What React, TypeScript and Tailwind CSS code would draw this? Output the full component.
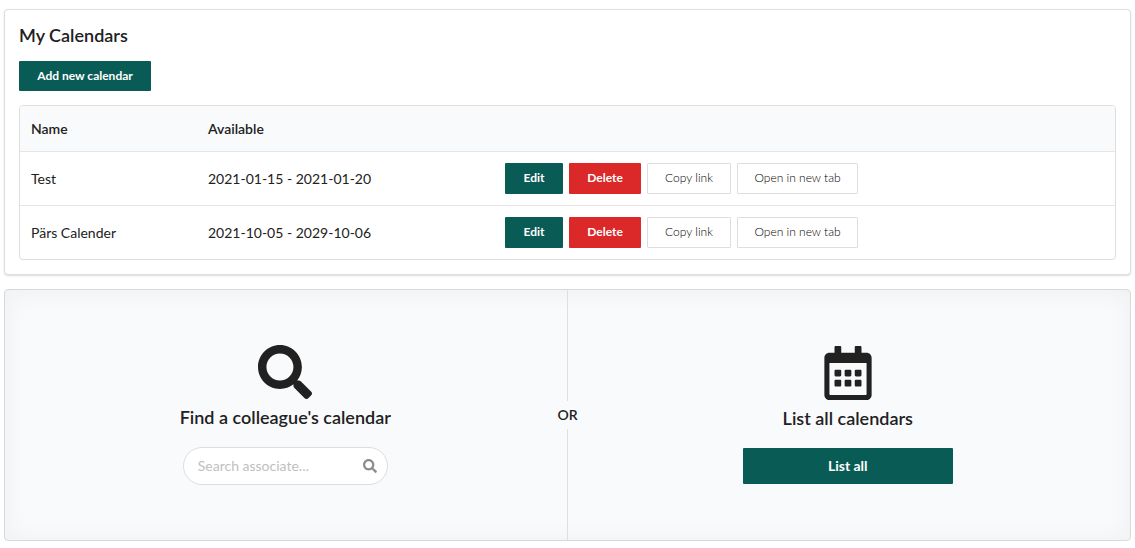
import type { ButtonHTMLAttributes } from "react";
import { FaRegCalendarAlt, FaSearch } from "react-icons/fa";

type Variant = "primary" | "danger" | "outline";

const variants: Record<Variant, string> = {
  primary: "bg-[#095c55] font-bold text-white hover:bg-[#074a44]",
  danger: "bg-[#db2828] font-bold text-white hover:bg-[#c52020]",
  outline: "border border-[#dededf] bg-white font-light text-black hover:bg-gray-50",
};

type ButtonProps = ButtonHTMLAttributes<HTMLButtonElement> & { variant?: Variant };

function Button({ variant = "primary", className = "", ...props }: ButtonProps) {
  return (
    <button
      type="button"
      className={`cursor-pointer rounded-[1px] whitespace-nowrap ${variants[variant]} ${className}`}
      {...props}
    />
  );
}

const calendars = [
  { name: "Test", available: "2021-01-15 - 2021-01-20" },
  { name: "Pärs Calender", available: "2021-10-05 - 2029-10-06" },
];

function MyCalendars() {
  return (
    <section className="rounded border border-[#dededf] bg-white px-3.5 pt-3 pb-3.5 shadow-[0_1px_2px_0_rgba(34,36,38,0.15)]">
      <h1 className="text-lg leading-[26px] font-semibold">My Calendars</h1>
      <Button className="mt-[13px] h-[30px] w-[132px] text-xs">Add new calendar</Button>
      <div className="mt-3.5 overflow-hidden rounded border border-[#dededf]">
        <table className="w-full table-fixed text-left">
          <thead className="bg-[#f9fafb]">
            <tr className="h-[45px]">
              <th className="w-[177px] px-[11px] pt-0.5 font-semibold">Name</th>
              <th className="w-[297px] px-[11px] pt-0.5 font-semibold">Available</th>
              <th aria-label="Actions" />
            </tr>
          </thead>
          <tbody>
            {calendars.map((calendar) => (
              <tr key={calendar.name} className="h-[54px] border-t border-[#e6e6e7]">
                <td className="px-[11px] pt-0.5">{calendar.name}</td>
                <td className="px-[11px] pt-0.5">{calendar.available}</td>
                <td className="px-[11px]">
                  <div className="flex gap-1.5 text-xs">
                    <Button className="h-[31px] w-[58px]">Edit</Button>
                    <Button variant="danger" className="h-[31px] w-[72px]">Delete</Button>
                    <Button variant="outline" className="h-[31px] w-[84px]">Copy link</Button>
                    <Button variant="outline" className="h-[31px] w-[121px]">Open in new tab</Button>
                  </div>
                </td>
              </tr>
            ))}
          </tbody>
        </table>
      </div>
    </section>
  );
}

function FindCalendars() {
  return (
    <section className="mt-3.5 flex min-h-[252px] items-stretch rounded border border-[#d8d9da] bg-[#f9fafc] shadow-[inset_0_2px_25px_0_rgba(34,36,38,0.05)]">
      <div className="flex flex-1 flex-col items-center justify-center pr-0.5">
        <FaSearch className="size-[54px] text-[#212121]" aria-hidden="true" />
        <h2 className="mt-1.5 text-lg leading-6 font-semibold">Find a colleague's calendar</h2>
        <label className="mt-[18px] flex h-[38px] w-[205px] items-center rounded-full border border-[#dededf] bg-white pr-2.5 pl-3.5">
          <input
            type="text"
            aria-label="Search associate"
            placeholder="Search associate..."
            className="min-w-0 flex-1 bg-transparent outline-none placeholder:text-[#c0c0c0]"
          />
          <FaSearch className="size-3.5 text-[#8c8c8c]" aria-hidden="true" />
        </label>
      </div>
      <div className="flex w-0 flex-col items-center">
        <span className="w-px flex-1 bg-[#dedfe0]" />
        <span className="py-1 font-semibold">OR</span>
        <span className="w-px flex-1 bg-[#dedfe0]" />
      </div>
      <div className="flex flex-1 flex-col items-center justify-center pr-0.5">
        <FaRegCalendarAlt className="size-[54px] text-[#212121]" aria-hidden="true" />
        <h2 className="mt-1.5 text-lg leading-6 font-semibold">List all calendars</h2>
        <Button className="mt-[18px] h-9 w-[210px] text-sm">List all</Button>
      </div>
    </section>
  );
}

export default function App() {
  return (
    <main className="px-1 pt-[9px] pb-[7px] font-['Lato',sans-serif] text-sm text-[#212121]">
      <MyCalendars />
      <FindCalendars />
    </main>
  );
}
